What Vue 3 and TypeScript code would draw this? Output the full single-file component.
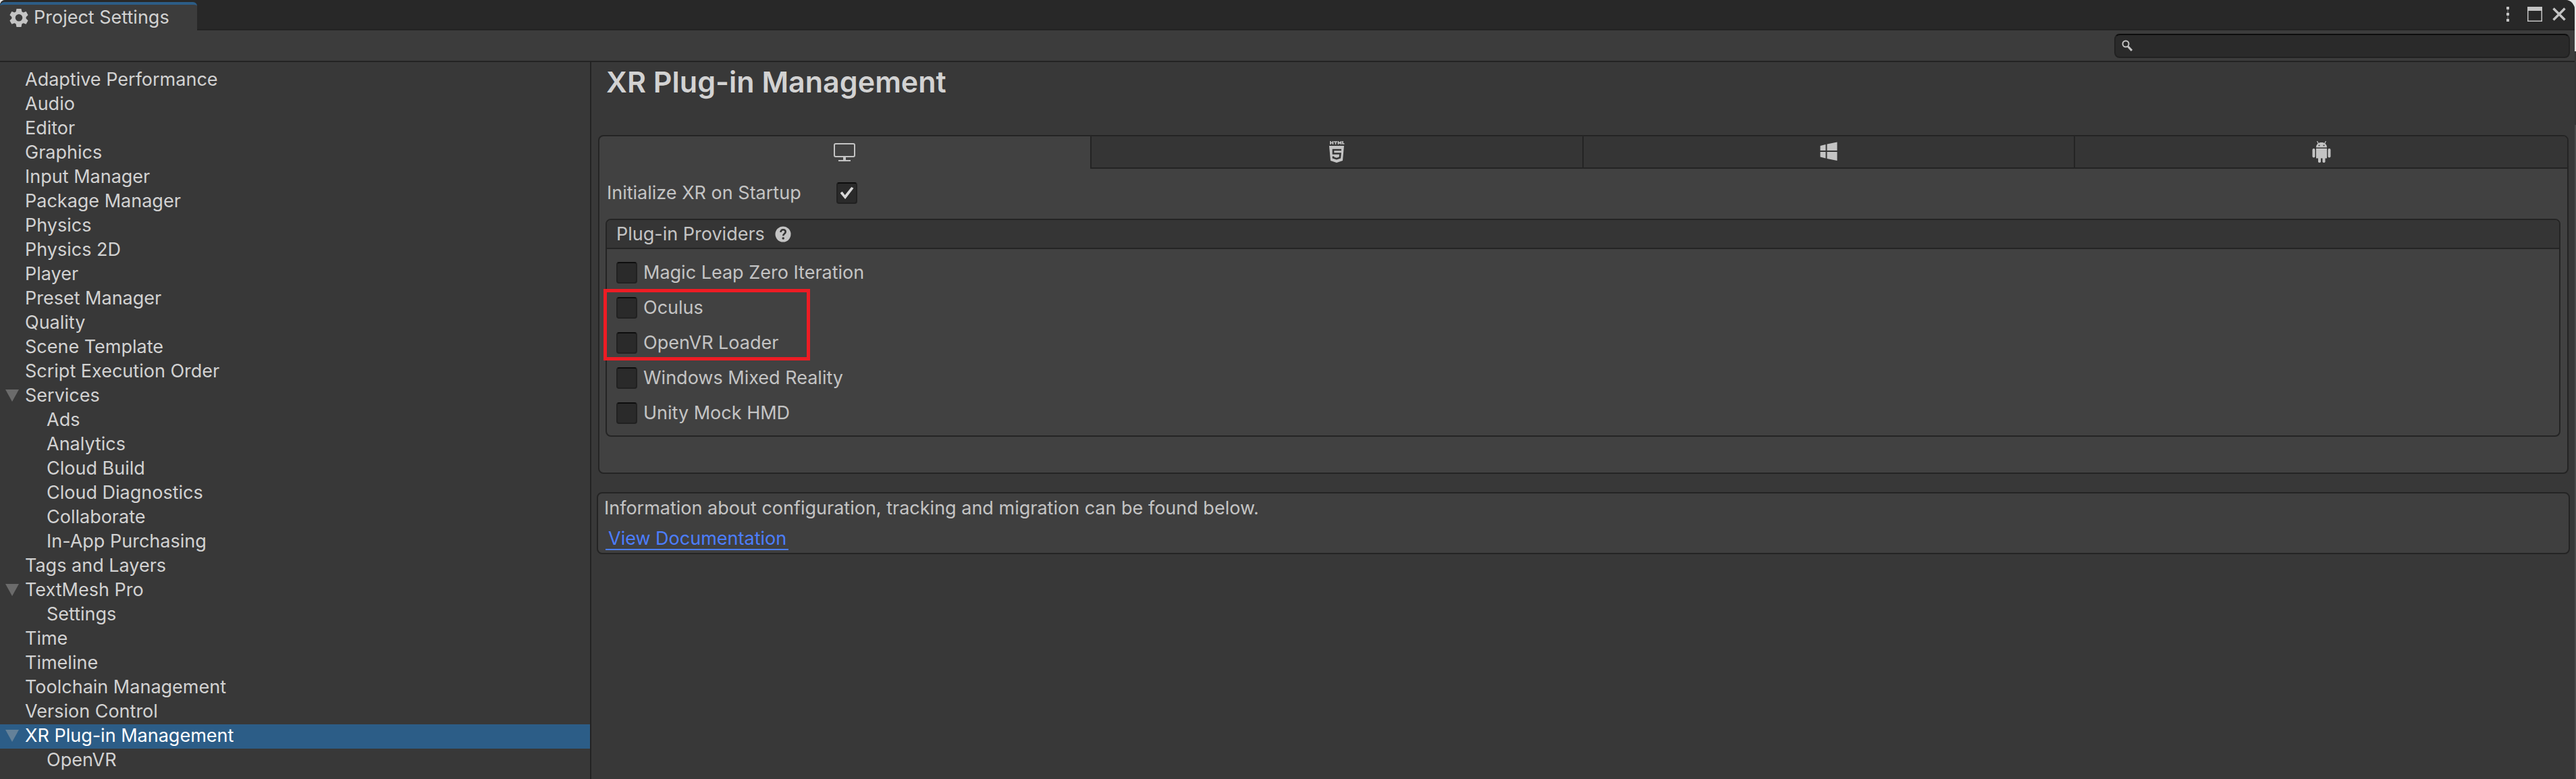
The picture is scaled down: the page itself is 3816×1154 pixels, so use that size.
<script setup lang="ts">
import { ref } from 'vue'

interface Entry {
  name: string
  child?: boolean
  open?: boolean
}

interface Provider {
  id: string
  name: string
}

const entries: Entry[] = [
  { name: 'Adaptive Performance' },
  { name: 'Audio' },
  { name: 'Editor' },
  { name: 'Graphics' },
  { name: 'Input Manager' },
  { name: 'Package Manager' },
  { name: 'Physics' },
  { name: 'Physics 2D' },
  { name: 'Player' },
  { name: 'Preset Manager' },
  { name: 'Quality' },
  { name: 'Scene Template' },
  { name: 'Script Execution Order' },
  { name: 'Services', open: true },
  { name: 'Ads', child: true },
  { name: 'Analytics', child: true },
  { name: 'Cloud Build', child: true },
  { name: 'Cloud Diagnostics', child: true },
  { name: 'Collaborate', child: true },
  { name: 'In-App Purchasing', child: true },
  { name: 'Tags and Layers' },
  { name: 'TextMesh Pro', open: true },
  { name: 'Settings', child: true },
  { name: 'Time' },
  { name: 'Timeline' },
  { name: 'Toolchain Management' },
  { name: 'Version Control' },
  { name: 'XR Plug-in Management', open: true },
  { name: 'OpenVR', child: true },
]

const platforms = ['Desktop', 'WebGL', 'Windows', 'Android']

const firstProviders: Provider[] = [{ id: 'magic-leap', name: 'Magic Leap Zero Iteration' }]
const markedProviders: Provider[] = [
  { id: 'oculus', name: 'Oculus' },
  { id: 'openvr', name: 'OpenVR Loader' },
]
const lastProviders: Provider[] = [
  { id: 'wmr', name: 'Windows Mixed Reality' },
  { id: 'mock', name: 'Unity Mock HMD' },
]
const groups = [
  { marked: false, items: firstProviders },
  { marked: true, items: markedProviders },
  { marked: false, items: lastProviders },
]

const selected = ref('XR Plug-in Management')
const platform = ref('Desktop')
const initOnStartup = ref(true)
const enabled = ref<string[]>([])
const query = ref('')
</script>

<template>
  <div class="desktop">
    <div class="window">
      <header class="titlebar">
        <div class="tab">
          <svg class="gear" viewBox="0 0 28 28" aria-hidden="true">
            <path
              fill-rule="evenodd"
              d="M10.5 1h7l.9 4.200 2.100 1.200 4.100-1.500 3 5.400-3 2.900v2.400l3 2.900-3 5.200-4.100-1.400-2.100 1.200-.9 4.500h-7l-.9-4.500-2.100-1.200-4.100 1.400-3-5.200 3-2.900v-2.400l-3-2.900 3-5.400 4.100 1.500 2.100-1.200zM14 9a5.300 5.300 0 1 0 0 10.600a5.300 5.300 0 0 0 0-10.600z"
            />
          </svg>
          <span>Project Settings</span>
        </div>
        <div class="controls">
          <button type="button" aria-label="Menu">
            <svg width="4" height="22" viewBox="0 0 4 22">
              <path d="M1 4h2v14H1z" fill="#555" />
              <path d="M0 0h4v4H0zM0 9h4v4H0zM0 18h4v4H0z" />
            </svg>
          </button>
          <button type="button" aria-label="Maximize">
            <svg width="22" height="22" viewBox="0 0 22 22">
              <path fill-rule="evenodd" d="M0 0h22v22H0zM1.500 6v14.500h19V6z" />
            </svg>
          </button>
          <button type="button" aria-label="Close">
            <svg width="20" height="20" viewBox="0 0 20 20">
              <path d="M1.500 1.500l17 17M18.500 1.500l-17 17" fill="none" stroke="#c4c4c4" stroke-width="3.500" />
            </svg>
          </button>
        </div>
      </header>

      <div class="toolbar">
        <label class="search">
          <svg width="16" height="17" viewBox="0 0 16 17" fill="none" stroke="#c4c4c4" aria-hidden="true">
            <circle cx="6" cy="6" r="4.500" stroke-width="2" fill="none" />
            <path d="M9.500 10l5.500 6" stroke-width="3" />
          </svg>
          <input v-model="query" type="text" aria-label="Search settings" />
        </label>
      </div>

      <div class="body">
        <nav class="sidebar">
          <button
            v-for="entry in entries"
            :key="entry.name"
            type="button"
            class="entry"
            :class="{ child: entry.child, selected: entry.name === selected }"
            @click="selected = entry.name"
          >
            <span class="fold">
              <svg v-if="entry.open" width="20" height="18" viewBox="0 0 20 18"><path d="M0 0h20L10 18z" /></svg>
            </span>
            <span>{{ entry.name }}</span>
          </button>
        </nav>

        <main class="content">
          <h1>XR Plug-in Management</h1>

          <section class="panel">
            <div class="platforms" role="tablist">
              <button
                v-for="name in platforms"
                :key="name"
                type="button"
                role="tab"
                class="platform"
                :class="{ active: name === platform }"
                :aria-label="name"
                :aria-selected="name === platform"
                @click="platform = name"
              >
                <svg v-if="name === 'Desktop'" width="32" height="32" viewBox="0 0 32 32">
                  <rect x="1" y="3" width="30" height="19" rx="2" fill="none" stroke="#c4c4c4" stroke-width="2" />
                  <path d="M14 22h4v5h7v2H7v-2h7z" />
                </svg>
                <svg v-else-if="name === 'WebGL'" width="32" height="32" viewBox="0 0 32 32">
                  <path
                    d="M7 0v5M10.500 0v5M7 2.500h3.500M12 1h5M14.500 1v4M18.500 5V1l2 2 2-2v4M25 0v4h2.500"
                    fill="none"
                    stroke="#c4c4c4"
                    stroke-width="1.700"
                  />
                  <path d="M5 7h22l-2 22-9 3-9-3z" />
                  <path d="M23 13H11v5.500h10.500l-.6 6-4.900 1.700-5-1.700v-2" fill="none" stroke="#353535" stroke-width="2.600" />
                </svg>
                <svg v-else-if="name === 'Windows'" width="32" height="32" viewBox="0 0 32 32">
                  <path d="M3.500 7l8-2v9h-8zM13.500 4.500l15-3V14h-15zM3.500 16h8v9.500l-8-2zM13.500 16h15v13l-15-3z" />
                </svg>
                <svg v-else width="32" height="32" viewBox="0 0 32 32">
                  <path d="M8 9.500C8 4.500 11.500 2 16 2s8 2.500 8 7.500z" />
                  <path d="M11.500 4L9.500 0M20.500 4l2-4" stroke="#c4c4c4" stroke-width="1.200" />
                  <path d="M11.500 6.500h2M18.500 6.500h2" stroke="#353535" stroke-width="1.500" />
                  <path d="M8 11h16v14.500H8z" />
                  <rect x="2.500" y="11" width="4" height="13.500" rx="2" />
                  <rect x="25.500" y="11" width="4" height="13.500" rx="2" />
                  <rect x="11" y="22" width="4" height="10" rx="1.800" />
                  <rect x="17.500" y="22" width="4" height="10" rx="1.800" />
                </svg>
              </button>
            </div>

            <div class="startup">
              <label for="init-startup">Initialize XR on Startup</label>
              <input id="init-startup" v-model="initOnStartup" type="checkbox" />
            </div>

            <div class="providers">
              <div class="providers-head">
                <span>Plug-in Providers</span>
                <svg width="24" height="24" viewBox="0 0 24 24" aria-hidden="true">
                  <circle cx="12" cy="12" r="11.500" />
                  <path
                    d="M8.500 9c0-2.500 1.500-3.800 3.600-3.800s3.600 1.300 3.600 3.300c0 2.700-3.500 2.800-3.500 5.700"
                    fill="none"
                    stroke="#353535"
                    stroke-width="2.600"
                  />
                  <circle cx="12.200" cy="18" r="1.800" fill="#353535" />
                </svg>
              </div>
              <div class="provider-list">
                <div v-for="(group, i) in groups" :key="i" class="group" :class="{ marked: group.marked }">
                  <div v-for="item in group.items" :key="item.id" class="provider">
                    <input :id="item.id" v-model="enabled" type="checkbox" :value="item.id" />
                    <label :for="item.id">{{ item.name }}</label>
                  </div>
                </div>
              </div>
            </div>
          </section>

          <section class="info">
            <p>Information about configuration, tracking and migration can be found below.</p>
            <a href="#documentation">View Documentation</a>
          </section>
        </main>
      </div>
    </div>
  </div>
</template>

<style>
body {
  background: #383838;
}
</style>

<style scoped>
.desktop {
  padding-right: 2px;
  background: linear-gradient(#e4e4e4 76px, #363636 76px, #363636 185px, #4a4a4a 185px);
}

.window {
  box-sizing: border-box;
  min-height: 100vh;
  display: flex;
  flex-direction: column;
  overflow: hidden;
  border-radius: 8px 14px 0 0;
  background: #383838;
  color: #c4c4c4;
  font: 400 27px/36px Inter, sans-serif;
}

svg {
  display: block;
  flex: none;
  fill: #c4c4c4;
}

button {
  margin: 0;
  padding: 0;
  border: 0;
  background: none;
  color: inherit;
  font: inherit;
}

.titlebar {
  display: flex;
  justify-content: space-between;
  height: 45px;
  background: linear-gradient(#282828 43px, #232323 43px);
}

.tab {
  box-sizing: border-box;
  display: flex;
  align-items: center;
  gap: 8px;
  width: 292px;
  height: 42px;
  margin-top: 3px;
  padding-left: 14px;
  border-top: 4px solid #2c5d87;
  border-radius: 6px 6px 0 0;
  background: #3c3c3c;
  color: #d2d2d2;
}

.gear {
  width: 28px;
  height: 28px;
}

.controls {
  display: flex;
  align-items: center;
  height: 42px;
  padding-right: 13px;
}

.controls button:nth-child(2) {
  margin: 0 15px 0 27px;
}

.toolbar {
  display: flex;
  justify-content: flex-end;
  align-items: center;
  height: 45px;
  padding-right: 7px;
  border-bottom: 2px solid #232323;
  background: #3c3c3c;
}

.search {
  box-sizing: border-box;
  display: flex;
  align-items: center;
  gap: 9px;
  width: 675px;
  height: 36px;
  padding: 0 9px;
  border: 2px solid #212121;
  border-top-color: #0d0d0d;
  border-radius: 8px;
  background: #2a2a2a;
}

.search input {
  flex: 1;
  min-width: 0;
  padding: 0;
  border: 0;
  outline: 0;
  background: none;
  color: inherit;
  font: inherit;
}

.body {
  flex: 1;
  display: flex;
}

.sidebar {
  flex: none;
  width: 874px;
  padding-top: 9px;
  border-right: 2px solid #232323;
  color: #d2d2d2;
}

.entry {
  box-sizing: border-box;
  display: flex;
  align-items: center;
  width: 100%;
  height: 36px;
  padding-bottom: 2px;
  line-height: 34px;
  text-align: left;
}

.entry.selected {
  background: #2c5d87;
  color: #fff;
}

.fold {
  box-sizing: border-box;
  width: 37px;
  padding-left: 8px;
}

.entry.child .fold {
  width: 69px;
}

.fold svg {
  fill: #6b6b6b;
}

.selected .fold svg {
  fill: #648199;
}

.content {
  flex: 1;
  min-width: 0;
  padding: 0 7px 0 8px;
}

h1 {
  margin: 0;
  padding: 3px 0 53px 14px;
  color: #d2d2d2;
  font-size: 43px;
  font-weight: 600;
  line-height: 52px;
}

.panel {
  margin: 0 2px;
  padding-bottom: 53px;
  border: 2px solid #242424;
  border-radius: 8px;
  background: #414141;
}

.platforms {
  display: grid;
  grid-template-columns: repeat(4, 1fr);
}

.platform {
  box-sizing: border-box;
  display: flex;
  align-items: center;
  justify-content: center;
  height: 48px;
  border-right: 2px solid #242424;
  border-bottom: 2px solid #242424;
  background: #353535;
}

.platform:last-child {
  border-right: 0;
  border-top-right-radius: 6px;
}

.platform.active {
  border-bottom: 0;
  background: none;
}

.startup {
  display: flex;
  align-items: center;
  height: 32px;
  padding: 20px 0 22px 11px;
}

.startup label {
  width: 340px;
}

input[type='checkbox'] {
  appearance: none;
  box-sizing: border-box;
  flex: none;
  display: grid;
  place-items: center;
  width: 31px;
  height: 32px;
  margin: 0;
  border: 2px solid #212121;
  border-top-color: #0d0d0d;
  border-radius: 4px;
  background: #2a2a2a;
}

input[type='checkbox']:checked::before {
  content: '';
  width: 20px;
  height: 18px;
  background: #d8d8d8;
  clip-path: polygon(0 50%, 16% 38%, 36% 66%, 84% 0, 100% 10%, 38% 100%);
}

.providers {
  margin: 0 10px 0 9px;
  border: 2px solid #242424;
  border-radius: 8px;
}

.providers-head {
  display: flex;
  align-items: center;
  gap: 15px;
  height: 41px;
  padding-left: 14px;
  border-bottom: 2px solid #242424;
  border-radius: 6px 6px 0 0;
  background: #353535;
}

.provider-list {
  padding: 9px 0 7px 14px;
}

.group {
  position: relative;
}

.group.marked::after {
  content: '';
  position: absolute;
  top: -2px;
  left: -19px;
  box-sizing: border-box;
  width: 306px;
  height: 106px;
  border: 5px solid #ed1c24;
  pointer-events: none;
}

.provider {
  display: flex;
  align-items: center;
  gap: 9px;
  height: 52px;
}

.info {
  margin-top: 27px;
  padding: 4px 9px;
  border: 2px solid #242424;
  border-radius: 8px;
  background: #3f3f3f;
}

.info p {
  margin: 0 0 12px;
}

.info a {
  display: block;
  width: fit-content;
  margin-left: 2px;
  padding: 0 3px 0 4px;
  border-bottom: 2px solid #4c7eff;
  color: #4c7eff;
  line-height: 30px;
  text-decoration: none;
}
</style>
